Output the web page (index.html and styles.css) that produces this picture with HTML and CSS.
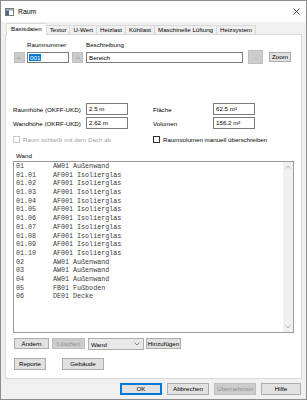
FILE: index.html
```html
<!DOCTYPE html>
<html lang="de">
<head>
  <meta charset="UTF-8" />
  <title>Raum</title>
  <link rel="stylesheet" href="styles.css">
</head>
<body>
  <div class="window">
    <div class="titlebar">
      <svg class="app-icon" width="9" height="8" viewBox="0 0 9 8">
        <rect x="0.5" y="0.5" width="8" height="7" fill="#fff" stroke="#7a7a7a"/>
        <rect x="1" y="1" width="7" height="1.5" fill="#9aa7b4"/>
        <rect x="1" y="2.5" width="3" height="4.5" fill="#3f6690"/>
      </svg>
      <span class="title">Raum</span>
      <svg class="close" width="7" height="7" viewBox="0 0 7 7">
        <path d="M0.5 0.5 L6.5 6.5 M6.5 0.5 L0.5 6.5" stroke="#222" stroke-width="0.8"/>
      </svg>
    </div>

    <div class="tabs">
      <div class="tab active">Basisdaten</div>
      <div class="tab">Textur</div>
      <div class="tab">U-Wert</div>
      <div class="tab">Heizlast</div>
      <div class="tab">Kühllast</div>
      <div class="tab">Maschinelle Lüftung</div>
      <div class="tab">Heizsystem</div>
    </div>

    <div class="page">
      <div class="top-row">
        <button class="btn btn-nav disabled">&lt;-</button>
        <div class="field">
          <label>Raumnummer</label>
          <div class="input input-num"><span class="sel">001</span></div>
        </div>
        <button class="btn btn-nav disabled">-&gt;</button>
        <div class="field">
          <label>Beschreibung</label>
          <div class="input input-desc">Bereich</div>
        </div>
        <button class="btn btn-dots disabled">...</button>
        <button class="btn btn-zoom">Zoom</button>
      </div>

      <div class="measures">
        <span>Raumhöhe (OKFF-UKD)</span>
        <div class="input">2.5 m</div>
        <span></span>
        <span>Fläche</span>
        <div class="input">62.5 m²</div>
        <span>Wandhöhe (OKRF-UKD)</span>
        <div class="input">2.62 m</div>
        <span></span>
        <span>Volumen</span>
        <div class="input">156.2 m³</div>
      </div>

      <div class="checks">
        <div class="check disabled"><span class="box"></span>Raum schließt mit dem Dach ab</div>
        <div class="check"><span class="box"></span>Raumvolumen manuell überschreiben</div>
      </div>

      <div class="list-label">Wand</div>
      <div class="list">
        <div class="items">
          <div class="item"><span class="code">01</span>AW01 Außenwand</div>
          <div class="item"><span class="code">01.01</span>AF001 Isolierglas</div>
          <div class="item"><span class="code">01.02</span>AF001 Isolierglas</div>
          <div class="item"><span class="code">01.03</span>AF001 Isolierglas</div>
          <div class="item"><span class="code">01.04</span>AF001 Isolierglas</div>
          <div class="item"><span class="code">01.05</span>AF001 Isolierglas</div>
          <div class="item"><span class="code">01.06</span>AF001 Isolierglas</div>
          <div class="item"><span class="code">01.07</span>AF001 Isolierglas</div>
          <div class="item"><span class="code">01.08</span>AF001 Isolierglas</div>
          <div class="item"><span class="code">01.09</span>AF001 Isolierglas</div>
          <div class="item"><span class="code">01.10</span>AF001 Isolierglas</div>
          <div class="item"><span class="code">02</span>AW01 Außenwand</div>
          <div class="item"><span class="code">03</span>AW01 Außenwand</div>
          <div class="item"><span class="code">04</span>AW01 Außenwand</div>
          <div class="item"><span class="code">05</span>FB01 Fußboden</div>
          <div class="item"><span class="code">06</span>DE01 Decke</div>
        </div>
        <div class="scrollbar">
          <svg width="6" height="4" viewBox="0 0 6 4"><path d="M0.5 3.5 L3 1 L5.5 3.5" fill="none" stroke="#a6a6a6" stroke-width="0.8"/></svg>
          <svg width="6" height="4" viewBox="0 0 6 4"><path d="M0.5 0.5 L3 3 L5.5 0.5" fill="none" stroke="#a6a6a6" stroke-width="0.8"/></svg>
        </div>
      </div>

      <div class="list-actions">
        <button class="btn btn-aendern">Ändern</button>
        <button class="btn btn-loeschen disabled">Löschen</button>
        <div class="combo">
          <span>Wand</span>
          <svg width="6" height="4" viewBox="0 0 6 4"><path d="M0.5 0.5 L3 3 L5.5 0.5" fill="none" stroke="#555" stroke-width="0.7"/></svg>
        </div>
        <button class="btn btn-add">Hinzufügen</button>
      </div>

      <div class="extra-actions">
        <button class="btn btn-report">Reporte</button>
        <button class="btn btn-building">Gebäude</button>
      </div>
    </div>

    <div class="dialog-buttons">
      <button class="btn btn-dialog default">OK</button>
      <button class="btn btn-dialog">Abbrechen</button>
      <button class="btn btn-dialog disabled">Übernehmen</button>
      <button class="btn btn-dialog">Hilfe</button>
    </div>
  </div>
</body>
</html>
```

FILE: styles.css
```css
* { box-sizing: border-box; }
body { margin: 0; font-family: "Liberation Sans", Arial, sans-serif; font-size: 6.2px; color: #000; background: #fff; }

.window { width: 307px; height: 400px; border: 1px solid #8c8c8c; background: #f0f0f0; display: flex; flex-direction: column; }
.titlebar { height: 21px; flex-shrink: 0; background: #fff; display: flex; align-items: center; padding: 0 6px 0 4px; }
.title { margin-left: 4px; font-size: 6.8px; }
.close { margin-left: auto; }

.tabs { display: flex; align-items: flex-end; height: 11px; margin: 1px 0 0 5px; position: relative; z-index: 1; flex-shrink: 0; }
.tab { height: 9px; line-height: 8px; padding: 0 3px; border: 1px solid #d9d9d9; border-bottom: none; margin-right: -1px; background: #f0f0f0; white-space: nowrap; }
.tab.active { height: 12px; line-height: 10px; margin-bottom: -1px; background: #fff; padding: 0 4px; }

.page { height: 345px; flex-shrink: 0; margin: 0 4px; background: #fff; border: 1px solid #d9d9d9; padding: 5px 7px 0 7px; }

.btn { font-family: inherit; font-size: inherit; color: #000; background: #e1e1e1; border: 1px solid #adadad; padding: 0; margin: 0; height: 12px; line-height: 10px; text-align: center; }
.btn.disabled { background: #cccccc; border-color: #bfbfbf; color: #8d8d8d; }
.input { height: 11px; border: 1px solid #7a7a7a; background: #fff; padding-left: 2px; line-height: 9px; white-space: nowrap; }

.top-row { display: flex; align-items: flex-end; }
.field { display: flex; flex-direction: column; }
.field label { line-height: 10px; height: 10px; margin-bottom: 2px; }
.btn-nav { width: 11px; height: 11px; line-height: 9px; }
.top-row .btn-nav:first-child { margin-left: 1px; margin-right: 2px; }
.top-row .btn-nav { margin-left: 3px; margin-right: 3px; }
.input-num { width: 42px; padding-left: 1px; }
.sel { background: #0078d7; color: #fff; padding: 0 1px; }
.input-desc { width: 157px; }
.btn-dots { width: 15px; height: 14px; line-height: 12px; margin-left: 5px; margin-bottom: -1px; }
.btn-zoom { width: 22px; height: 10px; line-height: 8px; margin-left: 6px; margin-bottom: 1px; }

.measures { display: grid; grid-template-columns: 73px 42px 25px 60px 42px; grid-auto-rows: 12px; row-gap: 2px; align-items: center; margin-top: 40px; }
.measures .input { height: 12px; line-height: 10px; }

.checks { display: flex; margin-top: 7px; height: 7px; align-items: center; }
.check { display: flex; align-items: center; white-space: nowrap; }
.check:first-child { width: 140px; }
.check .box { width: 7px; height: 7px; border: 1px solid #333; background: #fff; margin-right: 3px; }
.check.disabled { color: #a0a0a0; }
.check.disabled .box { border-color: #c8c8c8; }

.list-label { margin-top: 8px; line-height: 10px; padding-left: 3px; }
.list { display: flex; height: 172px; border: 1px solid #9a9a9a; }
.items { flex: 1; padding-left: 2px; font-family: "Liberation Mono", "Courier New", monospace; font-size: 6.7px; color: #3a3a3a; -webkit-font-smoothing: antialiased; }
.item { height: 8.7px; line-height: 8.7px; white-space: pre; }
.code { display: inline-block; width: 37px; }
.scrollbar { width: 10px; background: #f0f0f0; display: flex; flex-direction: column; justify-content: space-between; align-items: center; padding: 3px 0; }

.list-actions { display: flex; align-items: flex-start; margin-top: 5px; }
.btn-aendern { width: 35px; margin-left: 1px; height: 11px; line-height: 9px; }
.btn-loeschen { width: 33px; margin-left: 3px; height: 11px; line-height: 9px; }
.combo { width: 56px; height: 12px; margin-left: 3px; border: 1px solid #adadad; background: #e8e8e8; display: flex; align-items: center; justify-content: space-between; padding: 0 3px 0 2px; }
.btn-add { width: 35px; margin-left: 2px; height: 11px; line-height: 9px; }

.extra-actions { display: flex; margin-top: 8px; }
.btn-report { width: 32px; margin-left: 1px; }
.btn-building { width: 42px; margin-left: 16px; }

.dialog-buttons { display: flex; justify-content: flex-end; gap: 5px; margin-top: 4px; padding-right: 5px; }
.btn-dialog { width: 42px; }
.btn-dialog:last-child { width: 40px; }
.btn-dialog.default { border: 1px solid #0078d7; box-shadow: inset 0 0 0 1px #0078d7; }
```
